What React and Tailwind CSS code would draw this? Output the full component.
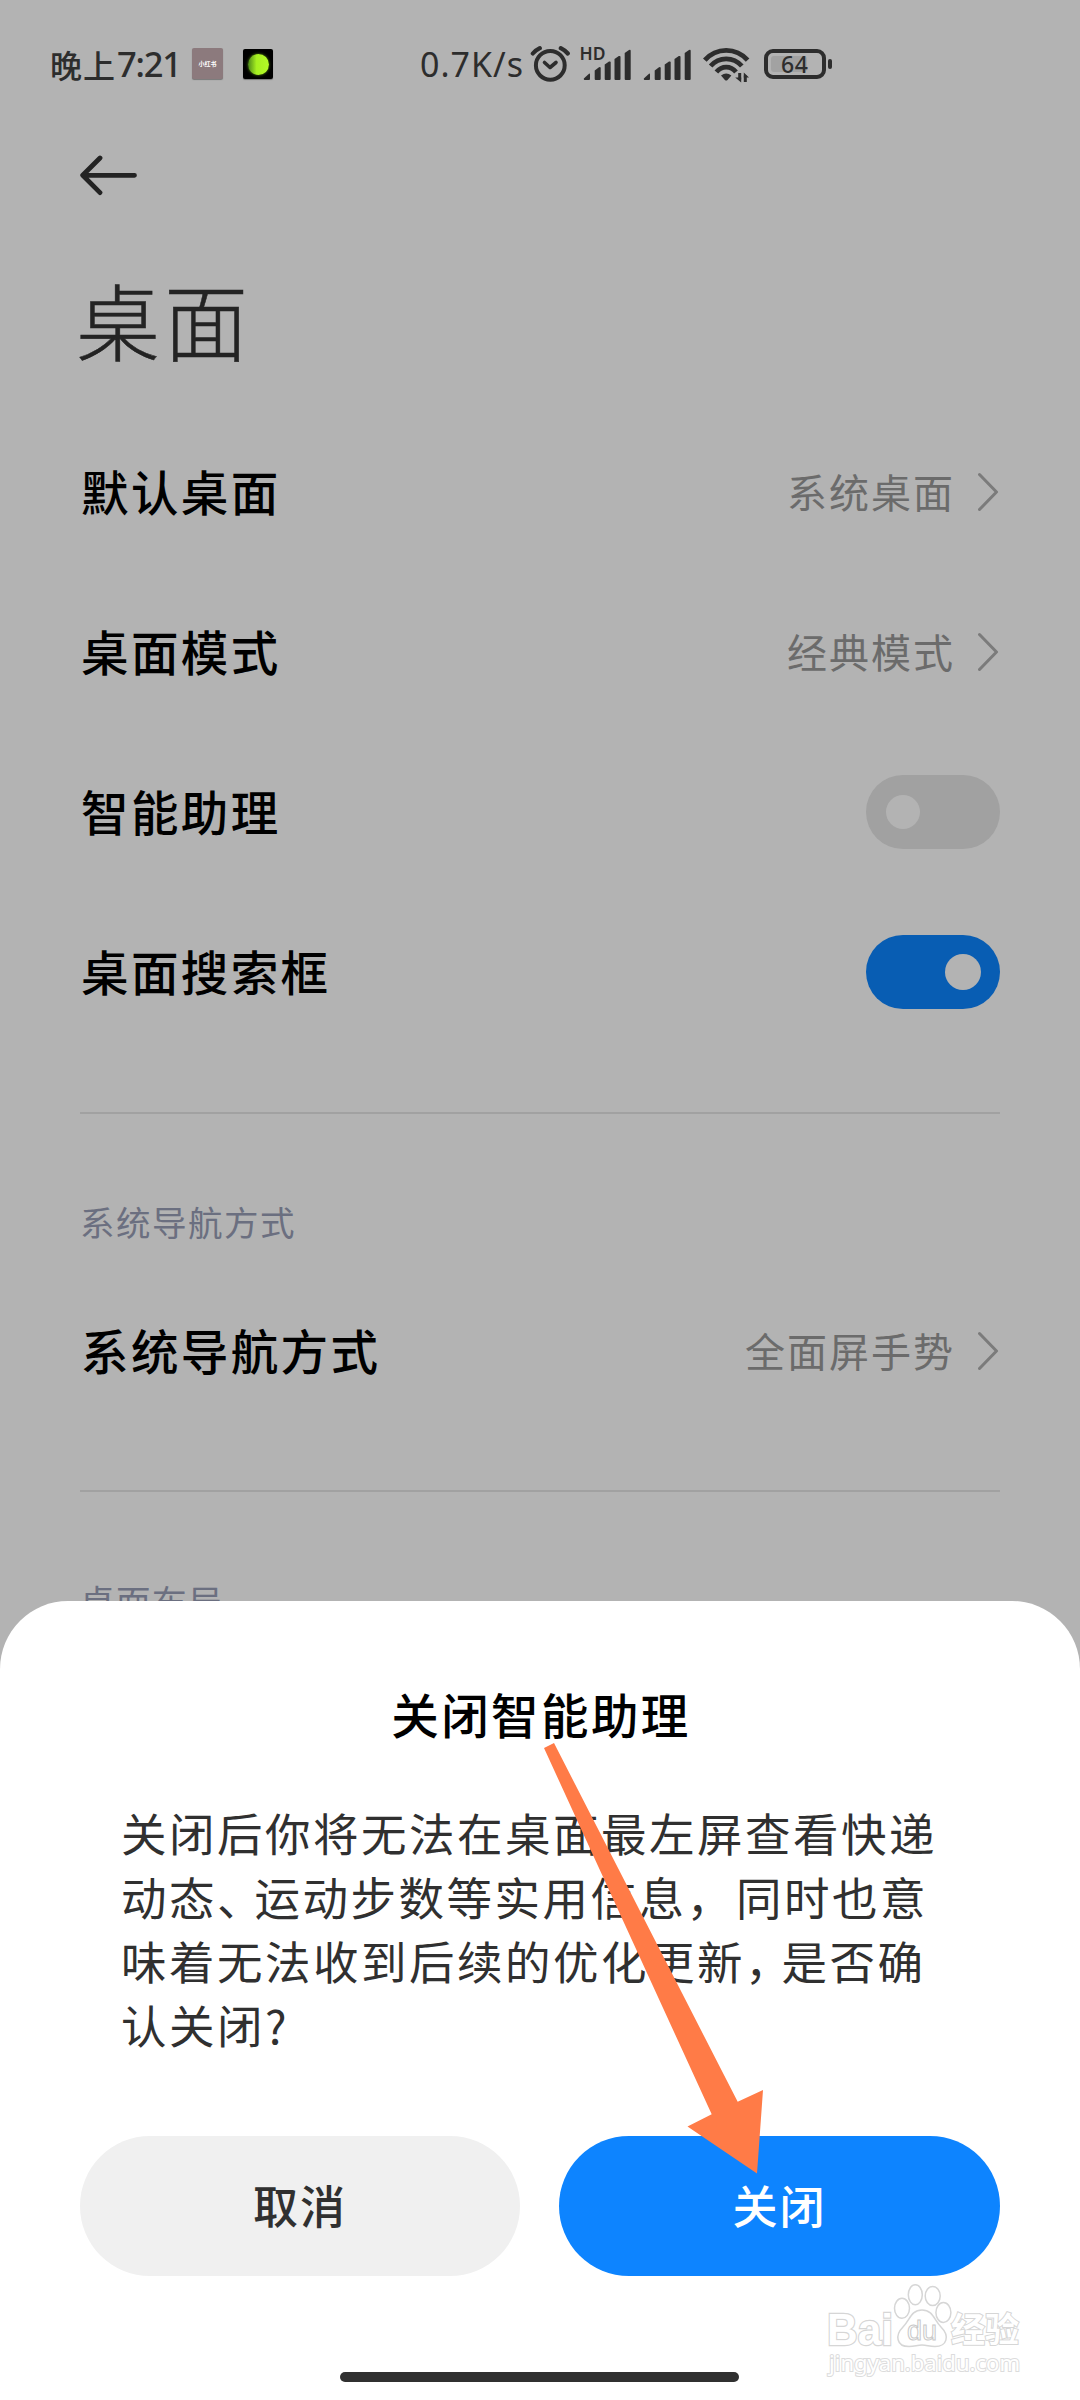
function SignalBars() {
  return (
    <>
      <path d="M1.5 34Q.6 34 .8 32.6L6 27.700Q7 27 7 28.300V33Q7 34 6 34Z" />
      <path d="M11.700 24.500L16 21.300Q17.700 20.500 17.700 22.200V33Q17.700 34 16.700 34H12.700Q11.700 34 11.700 33Z" />
      <path d="M21.700 18.500L26 15.600Q27.700 14.900 27.700 16.600V33Q27.700 34 26.700 34H22.700Q21.700 34 21.700 33Z" />
      <path d="M31.500 13L35.800 10.100Q37.500 9.400 37.500 11.100V33Q37.500 34 36.500 34H32.500Q31.500 34 31.500 33Z" />
      <path d="M41.700 7L46 4Q47.700 3.300 47.700 5V33Q47.700 34 46.700 34H42.700Q41.700 34 41.700 33Z" />
    </>
  );
}

function StatusBar() {
  return (
    <div className="flex h-[128px] items-start pl-[50px] pt-[44px] text-[#2d2d2d]">
      <div className="flex h-[40px] w-[142px] shrink-0 items-center whitespace-nowrap text-[32px] font-medium leading-[40px]">
        <span className="tracking-[1px]">晚上</span>
        <span className="pl-[1px] font-['Noto_Sans'] text-[34.5px] font-medium tracking-[-1.2px]">7:21</span>
      </div>
      <div className="mt-[4px] flex h-[31px] w-[31px] shrink-0 items-center justify-center rounded-[2px] bg-[#8c7a7d] shadow-[0_1px_1px_#777]">
        <span className="text-[6px] font-bold leading-none text-white">小红书</span>
      </div>
      <div className="ml-[20px] mt-[5px] flex h-[30px] w-[30px] shrink-0 items-center justify-end rounded-[2px] bg-black pr-[4px] shadow-[0_1px_1px_#777]">
        <div className="h-[21px] w-[21px] rounded-full bg-linear-to-r from-[#4d8a18] via-[#a6f020] via-40% to-[#b4fa28] shadow-[0_0_3px_#5a8f14]" />
      </div>
      <div className="ml-[147px] h-[40px] w-[110px] shrink-0 whitespace-nowrap font-['Noto_Sans'] text-[34px] leading-[40px] tracking-[1px]">
        0.7K/s
      </div>
      <svg width="42" height="40" viewBox="0 0 42 40" fill="none" stroke="#2d2d2d" className="shrink-0">
        <circle cx="20.300" cy="21.300" r="14.400" strokeWidth="4" />
        <path d="M14.500 18.500L20 23.500L26 18.500" strokeWidth="3.600" strokeLinecap="round" strokeLinejoin="round" />
        <path d="M2.800 9.500Q5.500 6.300 9.800 4.200M37.800 9.500Q35 6.300 30.800 4.200" strokeWidth="4.200" strokeLinecap="round" />
      </svg>
      <svg width="52" height="46" viewBox="-4 -10 52 46" fill="#2d2d2d" className="-mt-[8px] ml-[7px] shrink-0">
        <text x="-3.500" y="14.300" fontFamily="Noto Sans" fontWeight="600" fontSize="17.500" textLength="26" lengthAdjust="spacingAndGlyphs">HD</text>
        <SignalBars />
      </svg>
      <svg width="48" height="36" viewBox="0 0 48 36" fill="#2d2d2d" className="ml-[12px] mt-[2px] shrink-0">
        <SignalBars />
      </svg>
      <svg width="50" height="40" viewBox="0 0 50 40" fill="none" stroke="#2d2d2d" strokeWidth="4.800" className="ml-[11px] shrink-0">
        <path d="M2.800 16.200Q11.500 6.400 24.200 6.400T45.600 16.200" />
        <path d="M8.600 22Q15 14.800 24.200 14.800T39.800 22" />
        <path d="M14.400 28Q18.500 23.200 24.200 23.200Q30 23.200 34 28" />
        <path d="M19 31.600Q24.200 27.500 29.400 31.600L25.500 36Q24.200 37.200 22.900 36Z" fill="#2d2d2d" stroke="none" />
        <path d="M37.700 29V35.500M43.300 38V31.500" strokeWidth="3" />
        <path d="M33.200 33.500H39.200V38.500ZM47 33.500H41.800V28.500Z" fill="#2d2d2d" stroke="none" />
      </svg>
      <div className="ml-[12px] mt-[5px] flex shrink-0 items-center">
        <div className="flex h-[30px] w-[62px] items-center rounded-[9px] border-4 border-[#2d2d2d] px-[3px]">
          <div className="flex h-[16px] w-[36px] items-center rounded-[3px] bg-[#a2a2a2]">
            <span className="pl-[10px] font-['Noto_Sans'] text-[23px] font-medium leading-[16px] tracking-[0.5px]">64</span>
          </div>
        </div>
        <div className="ml-[2px] h-[10px] w-[4px] rounded-[2px] bg-[#2d2d2d]" />
      </div>
    </div>
  );
}

function Chevron() {
  return (
    <svg width="22" height="40" viewBox="0 0 22 40" fill="none" stroke="#7b7b7b" strokeWidth="3" strokeLinecap="round" strokeLinejoin="round" className="ml-[23px]">
      <path d="M1.500 2.500L18.500 20L1.500 37.500" />
    </svg>
  );
}

function Switch({ on }) {
  return on ? (
    <div className="flex h-[74px] w-[134px] items-center justify-end rounded-full bg-[#085db3] pr-[19px]">
      <div className="h-[36px] w-[36px] rounded-full bg-[#b3b3b3]" />
    </div>
  ) : (
    <div className="flex h-[74px] w-[134px] items-center rounded-full bg-[#a1a1a1] pl-[20px]">
      <div className="h-[34px] w-[34px] rounded-full bg-[#b3b3b3]" />
    </div>
  );
}

function Row({ label, value, children }) {
  return (
    <div className="flex h-[160px] items-center justify-between">
      <span className="pb-[3px] pl-[1px] text-[47.5px] font-medium leading-[60px] tracking-[2.4px] text-black">{label}</span>
      {value ? (
        <div className="flex items-center">
          <span className="pb-[3px] text-[40px] leading-[60px] tracking-[2px] text-[#6b6b6b]">{value}</span>
          <Chevron />
        </div>
      ) : (
        children
      )}
    </div>
  );
}

function SectionLabel({ children }) {
  return <div className="text-[34.5px] leading-[50px] tracking-[1.5px] text-[#6b6f80]">{children}</div>;
}

function Watermark() {
  return (
    <svg width="204" height="104" viewBox="0 0 204 104" className="absolute bottom-[14px] right-[52px]" fill="#fff" stroke="#d6d6d6" strokeWidth="1.500">
      <text x="3" y="62.500" fontFamily="Liberation Sans" fontWeight="700" fontSize="45" textLength="66" lengthAdjust="spacingAndGlyphs" strokeWidth="2.400" style={{ paintOrder: "stroke" }}>Bai</text>
      <ellipse cx="78" cy="26.300" rx="7.500" ry="10" />
      <ellipse cx="91.300" cy="12.800" rx="7" ry="10" />
      <ellipse cx="108.700" cy="14" rx="7.500" ry="9.500" />
      <ellipse cx="119.400" cy="30.500" rx="7.500" ry="10" />
      <path d="M98 28C109 28 110 38 117 45C126 54 123 64.500 111 64.500C105 64.500 103 63 98 63C93 63 91 64.500 85 64.500C72 64.500 71 53 79 45C86 38 87 28 98 28Z" />
      <text x="83" y="57.500" fontFamily="Liberation Sans" fontSize="27" textLength="30" lengthAdjust="spacingAndGlyphs" stroke="#c8c8c8" strokeWidth="1">du</text>
      <text x="127" y="60" fontFamily="Noto Sans CJK SC" fontWeight="700" fontSize="34" textLength="68" strokeWidth="2" style={{ paintOrder: "stroke" }}>经验</text>
      <text x="5" y="88.500" fontFamily="Noto Sans" fontSize="22" textLength="191" lengthAdjust="spacingAndGlyphs" stroke="#dcdcdc" strokeWidth="2" style={{ paintOrder: "stroke" }}>jingyan.baidu.com</text>
    </svg>
  );
}

function Dialog() {
  return (
    <div className="absolute inset-x-0 bottom-0 h-[799px] rounded-t-[68px] bg-white px-[80px] pt-[81px]">
      <h2 className="pl-[2px] text-center text-[47.5px] font-medium leading-[64px] tracking-[2.4px] text-black">关闭智能助理</h2>
      <p className="mt-[54px] whitespace-nowrap pl-[41px] text-[45.5px] leading-[64px] tracking-[2.5px] text-[#303030]">
        关闭后你将无法在桌面最左屏查看快递<br />
        动态<span className="tracking-[-8px]">、</span>运动步数等实用信息<span className="tracking-[4px]">，</span>同时也意<br />
        味着无法收到后续的优化更新<span className="tracking-[-9px]">，</span>是否确<br />
        认关闭?
      </p>
      <div className="mt-[80px] flex justify-between">
        <button className="h-[140px] w-[440px] rounded-full bg-[#f0f0f0] pb-[2px] text-[45px] font-medium tracking-[2px] text-[#303030]">取消</button>
        <button className="h-[140px] w-[441px] rounded-full bg-[#0d84ff] pb-[2px] text-[45px] font-medium tracking-[2px] text-white">关闭</button>
      </div>
      <svg width="230" height="440" viewBox="540 1740 230 440" className="absolute left-[540px] top-[139px]" fill="#ff7b47">
        <path d="M544 1748L554 1743L737.700 2101.800L763 2090L757 2173.600L687.500 2126.400L711.700 2114.300Z" />
      </svg>
      <Watermark />
      <div className="absolute bottom-[18px] left-[340px] h-[10px] w-[399px] rounded-full bg-[#303030]" />
    </div>
  );
}

export default function App() {
  return (
    <div className="relative h-[2400px] w-[1080px] overflow-hidden bg-[#b3b3b3] font-['Noto_Sans_CJK_SC',sans-serif]">
      <StatusBar />
      <div className="px-[80px]">
        <svg width="60" height="48" viewBox="0 0 60 48" fill="none" stroke="#232323" strokeWidth="4.800" strokeLinecap="round" strokeLinejoin="round" className="mt-[24px]">
          <path d="M20 6L2.700 23.300L20 40.600M3.500 23.300H54.500" />
        </svg>
        <h1 className="ml-[-4px] mt-[62px] text-[84px] font-light leading-[114px] tracking-[4px] text-[#232323] [-webkit-text-stroke:0.5px_#232323]">桌面</h1>
        <div className="mt-[36px]">
          <Row label="默认桌面" value="系统桌面" />
          <Row label="桌面模式" value="经典模式" />
          <Row label="智能助理"><Switch /></Row>
          <Row label="桌面搜索框"><Switch on /></Row>
        </div>
        <div className="mt-[60px] h-[2px] bg-[#a1a1a1]" />
        <div className="mt-[82px]"><SectionLabel>系统导航方式</SectionLabel></div>
        <div className="mt-[25px]"><Row label="系统导航方式" value="全面屏手势" /></div>
        <div className="mt-[59px] h-[2px] bg-[#a1a1a1]" />
        <div className="mt-[83px]"><SectionLabel>桌面布局</SectionLabel></div>
      </div>
      <Dialog />
    </div>
  );
}
